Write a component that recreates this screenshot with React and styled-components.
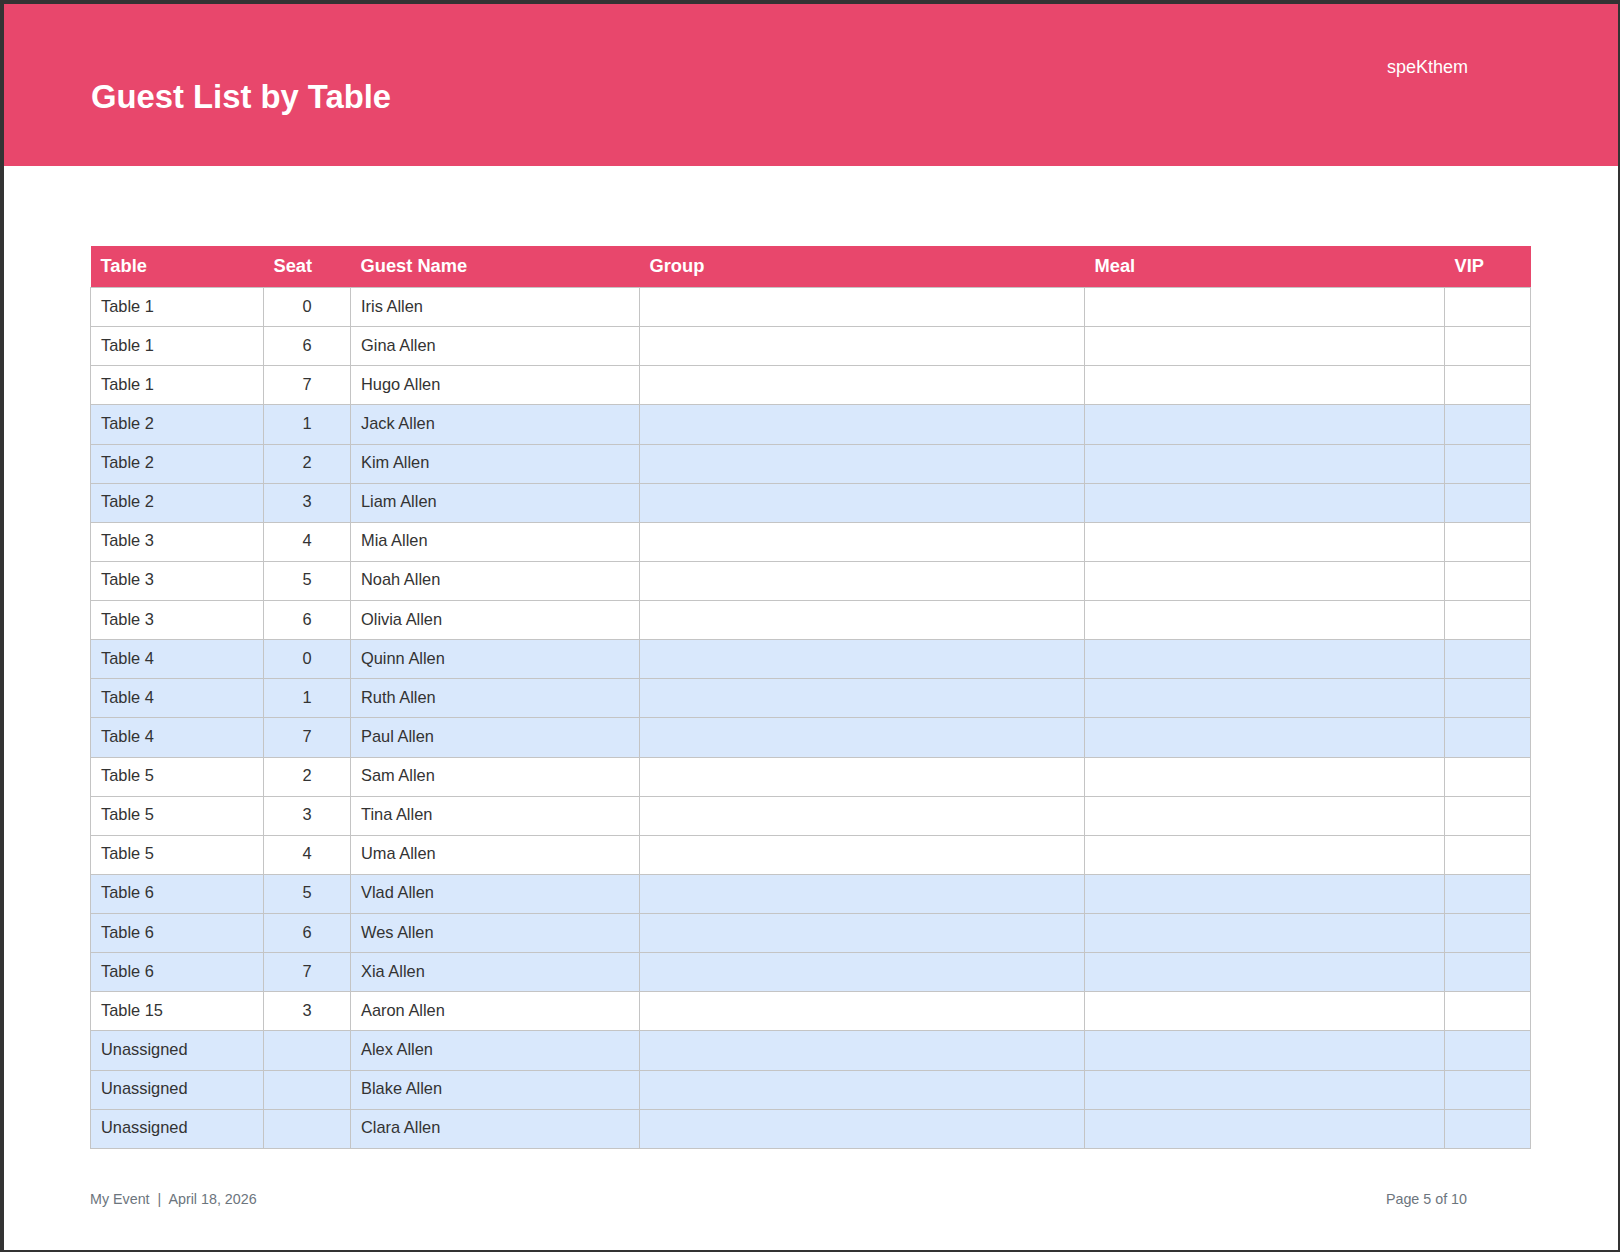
import React from 'react';
import styled, { createGlobalStyle } from 'styled-components';

const GlobalStyle = createGlobalStyle`
  html, body {
    margin: 0;
    padding: 0;
    background: #ffffff;
  }
`;

const Page = styled.div`
  box-sizing: border-box;
  width: 1620px;
  height: 1252px;
  border-style: solid;
  border-color: #333333;
  border-width: 4px 2px 2px 4px;
  background: #ffffff;
  font-family: 'Liberation Sans', Arial, sans-serif;
  display: flex;
  flex-direction: column;
`;

const Banner = styled.header`
  height: 162px;
  flex: none;
  background: #e8476c;
  color: #ffffff;
  display: flex;
  justify-content: space-between;
  padding: 0 150px 0 87px;
`;

const Heading = styled.h1`
  margin: 73px 0 0;
  font-size: 32.8px;
  line-height: 40px;
  font-weight: 700;
`;

const Brand = styled.div`
  margin-top: 51px;
  font-size: 18px;
  line-height: 24px;
`;

const Body = styled.main`
  padding: 80px 86px 0;
`;

const GuestTable = styled.table`
  width: 1440px;
  border-collapse: collapse;
  table-layout: fixed;
  font-size: 16.4px;
  color: #333333;
`;

const HeadCell = styled.th`
  height: 39px;
  padding: 0 10px 2px;
  background: #e8476c;
  color: #ffffff;
  font-size: 18.3px;
  font-weight: 700;
  text-align: left;
`;

const Cell = styled.td`
  height: 36.14px;
  padding: 0 10px 2px;
  border: 1px solid #c4c4c4;
  background: ${props => (props.$shaded ? '#d9e8fc' : '#ffffff')};
  text-align: ${props => props.$align || 'left'};
`;

const Footer = styled.footer`
  display: flex;
  justify-content: space-between;
  padding: 41px 151px 0 86px;
  font-size: 14.3px;
  line-height: 18px;
  color: #6c757d;
`;

const columns = [
  { label: 'Table', width: 173 },
  { label: 'Seat', width: 87 },
  { label: 'Guest Name', width: 289 },
  { label: 'Group', width: 445 },
  { label: 'Meal', width: 360 },
  { label: 'VIP', width: 86 },
];

const guests = [
  ['Table 1', 0, 'Iris Allen'],
  ['Table 1', 6, 'Gina Allen'],
  ['Table 1', 7, 'Hugo Allen'],
  ['Table 2', 1, 'Jack Allen'],
  ['Table 2', 2, 'Kim Allen'],
  ['Table 2', 3, 'Liam Allen'],
  ['Table 3', 4, 'Mia Allen'],
  ['Table 3', 5, 'Noah Allen'],
  ['Table 3', 6, 'Olivia Allen'],
  ['Table 4', 0, 'Quinn Allen'],
  ['Table 4', 1, 'Ruth Allen'],
  ['Table 4', 7, 'Paul Allen'],
  ['Table 5', 2, 'Sam Allen'],
  ['Table 5', 3, 'Tina Allen'],
  ['Table 5', 4, 'Uma Allen'],
  ['Table 6', 5, 'Vlad Allen'],
  ['Table 6', 6, 'Wes Allen'],
  ['Table 6', 7, 'Xia Allen'],
  ['Table 15', 3, 'Aaron Allen'],
  ['Unassigned', '', 'Alex Allen'],
  ['Unassigned', '', 'Blake Allen'],
  ['Unassigned', '', 'Clara Allen'],
];

const isShaded = (table) => ['Table 2', 'Table 4', 'Table 6', 'Unassigned'].includes(table);

const App = () => (
  <>
    <GlobalStyle />
    <Page>
      <Banner>
        <Heading>Guest List by Table</Heading>
        <Brand>speKthem</Brand>
      </Banner>
      <Body>
        <GuestTable>
          <colgroup>
            {columns.map((col) => (
              <col key={col.label} style={{ width: col.width }} />
            ))}
          </colgroup>
          <thead>
            <tr>
              {columns.map((col) => (
                <HeadCell key={col.label}>{col.label}</HeadCell>
              ))}
            </tr>
          </thead>
          <tbody>
            {guests.map(([table, seat, name]) => {
              const shaded = isShaded(table);
              return (
                <tr key={name}>
                  <Cell $shaded={shaded}>{table}</Cell>
                  <Cell $shaded={shaded} $align="center">{seat}</Cell>
                  <Cell $shaded={shaded}>{name}</Cell>
                  <Cell $shaded={shaded} />
                  <Cell $shaded={shaded} />
                  <Cell $shaded={shaded} />
                </tr>
              );
            })}
          </tbody>
        </GuestTable>
      </Body>
      <Footer>
        <span>My Event &nbsp;|&nbsp; April 18, 2026</span>
        <span>Page 5 of 10</span>
      </Footer>
    </Page>
  </>
);

export default App;
